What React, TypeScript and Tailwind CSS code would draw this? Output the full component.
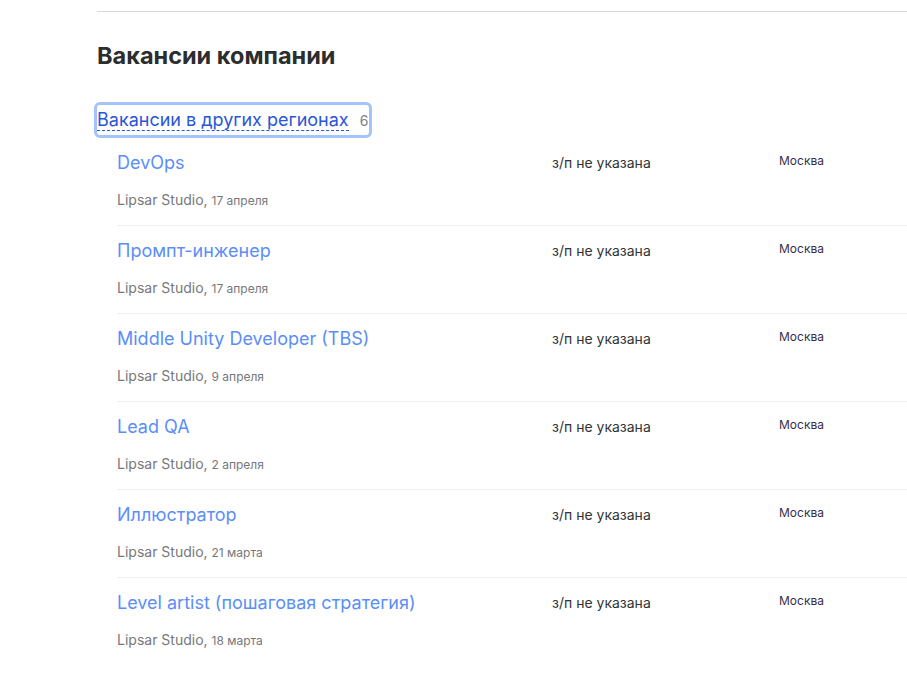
const vacancies = [
  { title: "DevOps", date: "17 апреля" },
  { title: "Промпт-инженер", date: "17 апреля" },
  { title: "Middle Unity Developer (TBS)", date: "9 апреля" },
  { title: "Lead QA", date: "2 апреля" },
  { title: "Иллюстратор", date: "21 марта" },
  { title: "Level artist (пошаговая стратегия)", date: "18 марта" },
];

const App = () => {
  return (
    <div
      className="min-h-[679px] bg-white pl-[97px] pt-[11px] text-[#303233]"
      style={{ fontFamily: "Inter, 'Noto Sans', sans-serif" }}
    >
      <div className="border-t border-[#d6d9dd]" />
      <h2 className="mt-[30px] text-[23.5px] font-bold leading-[28px] text-[#2c2d2e]">
        Вакансии компании
      </h2>

      <div className="mt-[32px] -ml-[3px] flex w-fit items-center rounded-[6px] border-[3px] border-[#a3c4fb] py-[4px] pr-[1px]">
        <span className="border-b border-dashed border-[#2a56d6] text-[18px] leading-[21px] text-[#2a56d6]">
          Вакансии в других регионах
        </span>
        <span className="ml-[11px] text-[14px] leading-[21px] text-[#808285]">6</span>
      </div>

      <div className="ml-[20px]">
        {vacancies.map((v, i) => (
          <div
            key={v.title}
            className={
              "flex h-[88px] pt-[14px] " +
              (i < vacancies.length - 1 ? "border-b border-[#eceef1]" : "")
            }
          >
            <div className="w-[435px]">
              <div className="text-[18px] leading-[22px] text-[#5b8ef9]">{v.title}</div>
              <div className="mt-[17px] text-[14px] leading-[18px] text-[#767879]">
                Lipsar Studio, <span className="text-[12px]">{v.date}</span>
              </div>
            </div>
            <div className="w-[227px] pt-[2px] text-[14px] leading-[18px] text-[#333435]">
              з/п не указана
            </div>
            <div className="pt-[1px] text-[12px] leading-[16px] text-[#3a2f4a]">Москва</div>
          </div>
        ))}
      </div>
    </div>
  );
};

export default App;
